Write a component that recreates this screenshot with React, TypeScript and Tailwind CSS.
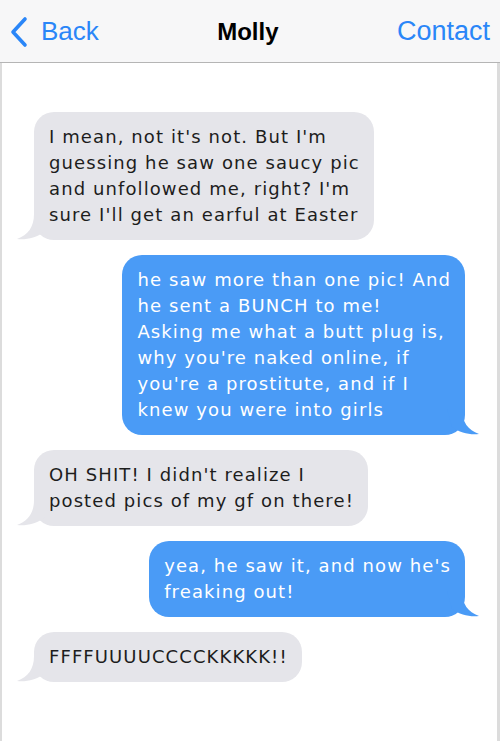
import { ReactNode } from "react";

type Msg = { from: "them" | "me"; lines: string[] };

const messages: Msg[] = [
  {
    from: "them",
    lines: [
      "I mean, not it's not. But I'm",
      "guessing he saw one saucy pic",
      "and unfollowed me, right? I'm",
      "sure I'll get an earful at Easter",
    ],
  },
  {
    from: "me",
    lines: [
      "he saw more than one pic! And",
      "he sent a BUNCH to me!",
      "Asking me what a butt plug is,",
      "why you're naked online, if",
      "you're a prostitute, and if I",
      "knew you were into girls",
    ],
  },
  {
    from: "them",
    lines: ["OH SHIT! I didn't realize I", "posted pics of my gf on there!"],
  },
  {
    from: "me",
    lines: ["yea, he saw it, and now he's", "freaking out!"],
  },
  { from: "them", lines: ["FFFFUUUUCCCCKKKKK!!"] },
];

const Tail = ({ side }: { side: "left" | "right" }) => {
  if (side === "left") {
    return (
      <svg
        className="absolute bottom-0 -left-[17px]"
        width="32"
        height="26"
        viewBox="0 0 32 26"
      >
        <path
          d="M17 0 C17 13 11 21 0 25 C9 26 19 24 27 18 L32 0 Z"
          fill="#e5e5ea"
        />
      </svg>
    );
  }
  return (
    <svg
      className="absolute bottom-0 -right-[14px]"
      width="32"
      height="26"
      viewBox="0 0 32 26"
    >
      <path
        d="M15 0 C15 13 21 21 32 25 C23 26 13 24 5 18 L0 0 Z"
        fill="#4a9bf6"
      />
    </svg>
  );
};

const Bubble = ({ msg }: { msg: Msg }) => {
  const mine = msg.from === "me";
  const body: ReactNode[] = [];
  msg.lines.forEach((l, i) => {
    if (i > 0) body.push(<br key={"b" + i} />);
    body.push(l);
  });
  return (
    <div className={mine ? "flex justify-end" : "flex justify-start"}>
      <div
        className={
          "relative rounded-[20px] pl-[15px] pr-[14px] py-3 whitespace-nowrap text-[18px] tracking-[1.1px] leading-[26px] " +
          (mine ? "bg-[#4a9bf6] text-white" : "bg-[#e5e5ea] text-[#1d1d1d]")
        }
      >
        <Tail side={mine ? "right" : "left"} />
        <span className="relative">{body}</span>
      </div>
    </div>
  );
};

export default function App() {
  return (
    <div className="w-[500px] h-[741px] bg-white overflow-hidden">
      <header className="h-[63px] bg-[#f7f7f8] border-b border-[#b5b5b5] flex items-center justify-between px-[10px] font-['Liberation_Sans',Arial,sans-serif]">
        <div className="flex items-center gap-[13px] text-[#2a86f8]">
          <svg width="18" height="32" viewBox="0 0 18 32" className="mt-[1px]">
            <path
              d="M15 3 L3 16 L15 29"
              fill="none"
              stroke="#2a86f8"
              strokeWidth="3.6"
              strokeLinecap="round"
              strokeLinejoin="round"
            />
          </svg>
          <span className="text-[26px]">Back</span>
        </div>
        <span className="text-[24px] font-bold text-black mt-[2px]">Molly</span>
        <span className="text-[27px] text-[#2a86f8]">Contact</span>
      </header>
      <main className="h-[678px] border-l-2 border-r-[3px] border-[#dcdcdc] pl-[32px] pr-[32px] pt-[49px] flex flex-col gap-[15px] font-['DejaVu_Sans',Verdana,sans-serif]">
        {messages.map((m, i) => (
          <Bubble key={i} msg={m} />
        ))}
      </main>
    </div>
  );
}
